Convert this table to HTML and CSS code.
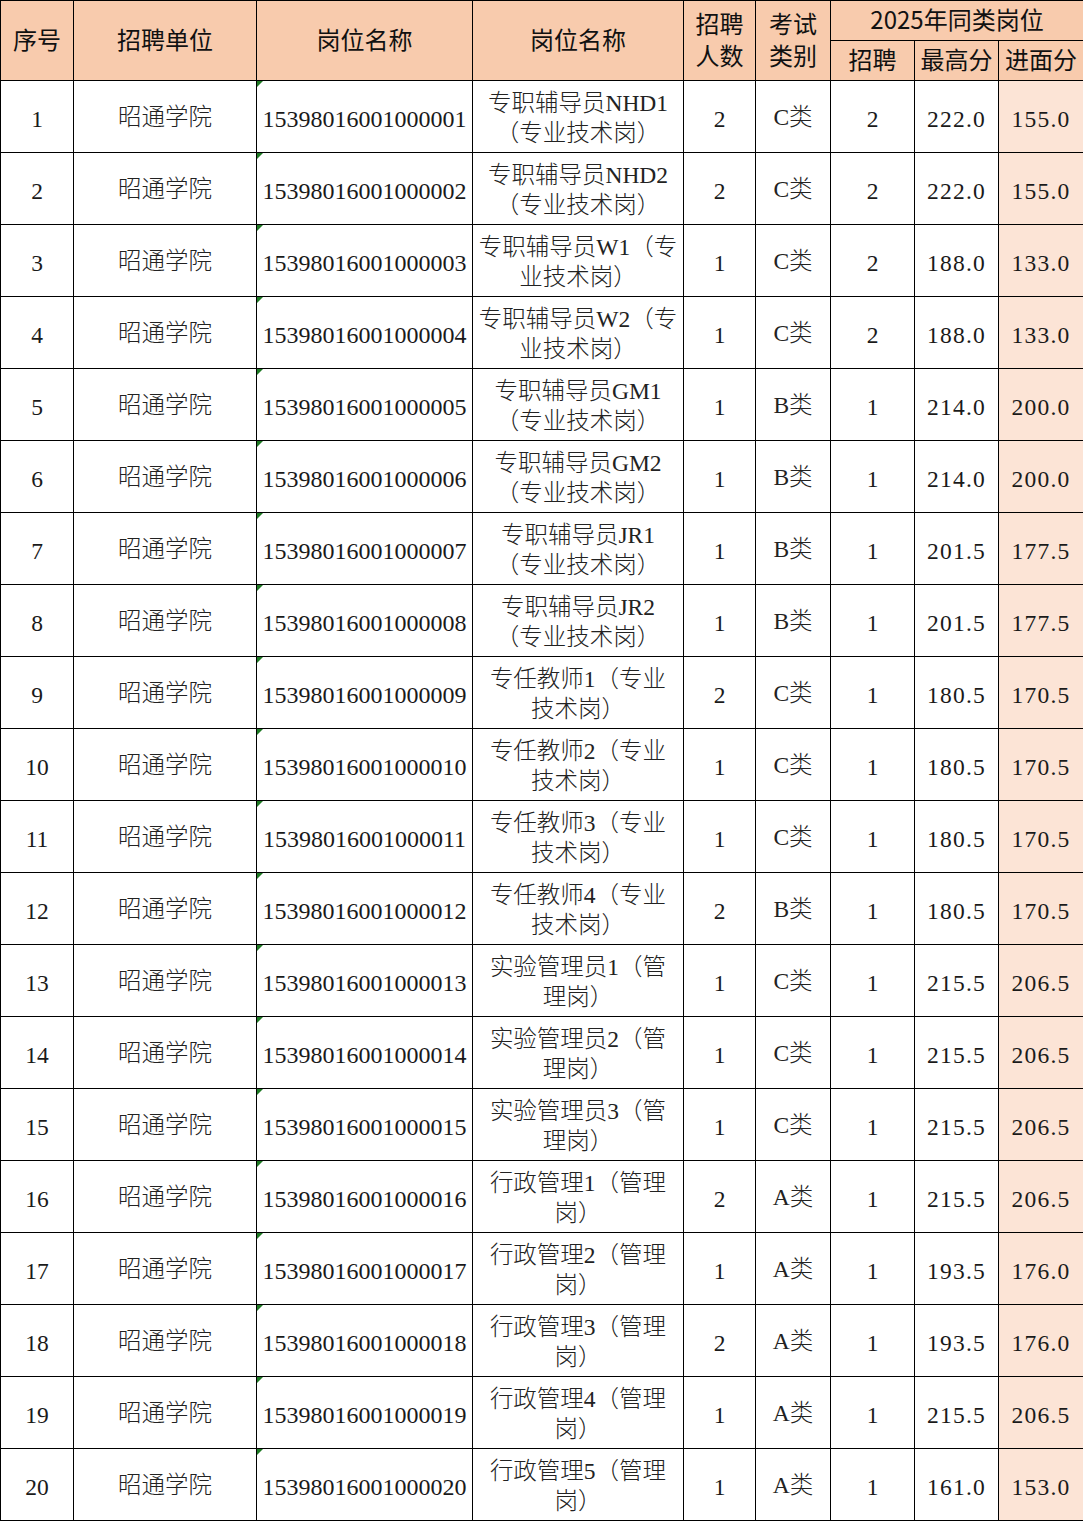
FILE: index.html
```html
<!DOCTYPE html>
<html lang="zh-CN">
<head>
<meta charset="utf-8">
<title>招聘岗位表</title>
<link rel="stylesheet" href="styles.css">
</head>
<body>
<table class="sheet">
  <colgroup>
    <col class="c-no"><col class="c-unit"><col class="c-code"><col class="c-name"><col class="c-num"><col class="c-type"><col class="c-hire"><col class="c-max"><col class="c-min">
  </colgroup>
  <thead>
    <tr class="h1">
      <th rowspan="2">序号</th>
      <th rowspan="2">招聘单位</th>
      <th rowspan="2">岗位名称</th>
      <th rowspan="2">岗位名称</th>
      <th rowspan="2" class="two">招聘<br>人数</th>
      <th rowspan="2" class="two">考试<br>类别</th>
      <th colspan="3">2025年同类岗位</th>
    </tr>
    <tr class="h2">
      <th>招聘</th>
      <th>最高分</th>
      <th>进面分</th>
    </tr>
  </thead>
  <tbody>
    <tr><td>1</td><td class="cn">昭通学院</td><td class="code">15398016001000001</td><td class="cn nm">专职辅导员NHD1<br>（专业技术岗）</td><td>2</td><td class="cn">C类</td><td>2</td><td class="sc">222.0</td><td class="sc hl">155.0</td></tr>
    <tr><td>2</td><td class="cn">昭通学院</td><td class="code">15398016001000002</td><td class="cn nm">专职辅导员NHD2<br>（专业技术岗）</td><td>2</td><td class="cn">C类</td><td>2</td><td class="sc">222.0</td><td class="sc hl">155.0</td></tr>
    <tr><td>3</td><td class="cn">昭通学院</td><td class="code">15398016001000003</td><td class="cn nm">专职辅导员W1（专<br>业技术岗）</td><td>1</td><td class="cn">C类</td><td>2</td><td class="sc">188.0</td><td class="sc hl">133.0</td></tr>
    <tr><td>4</td><td class="cn">昭通学院</td><td class="code">15398016001000004</td><td class="cn nm">专职辅导员W2（专<br>业技术岗）</td><td>1</td><td class="cn">C类</td><td>2</td><td class="sc">188.0</td><td class="sc hl">133.0</td></tr>
    <tr><td>5</td><td class="cn">昭通学院</td><td class="code">15398016001000005</td><td class="cn nm">专职辅导员GM1<br>（专业技术岗）</td><td>1</td><td class="cn">B类</td><td>1</td><td class="sc">214.0</td><td class="sc hl">200.0</td></tr>
    <tr><td>6</td><td class="cn">昭通学院</td><td class="code">15398016001000006</td><td class="cn nm">专职辅导员GM2<br>（专业技术岗）</td><td>1</td><td class="cn">B类</td><td>1</td><td class="sc">214.0</td><td class="sc hl">200.0</td></tr>
    <tr><td>7</td><td class="cn">昭通学院</td><td class="code">15398016001000007</td><td class="cn nm">专职辅导员JR1<br>（专业技术岗）</td><td>1</td><td class="cn">B类</td><td>1</td><td class="sc">201.5</td><td class="sc hl">177.5</td></tr>
    <tr><td>8</td><td class="cn">昭通学院</td><td class="code">15398016001000008</td><td class="cn nm">专职辅导员JR2<br>（专业技术岗）</td><td>1</td><td class="cn">B类</td><td>1</td><td class="sc">201.5</td><td class="sc hl">177.5</td></tr>
    <tr><td>9</td><td class="cn">昭通学院</td><td class="code">15398016001000009</td><td class="cn nm">专任教师1（专业<br>技术岗）</td><td>2</td><td class="cn">C类</td><td>1</td><td class="sc">180.5</td><td class="sc hl">170.5</td></tr>
    <tr><td>10</td><td class="cn">昭通学院</td><td class="code">15398016001000010</td><td class="cn nm">专任教师2（专业<br>技术岗）</td><td>1</td><td class="cn">C类</td><td>1</td><td class="sc">180.5</td><td class="sc hl">170.5</td></tr>
    <tr><td>11</td><td class="cn">昭通学院</td><td class="code">15398016001000011</td><td class="cn nm">专任教师3（专业<br>技术岗）</td><td>1</td><td class="cn">C类</td><td>1</td><td class="sc">180.5</td><td class="sc hl">170.5</td></tr>
    <tr><td>12</td><td class="cn">昭通学院</td><td class="code">15398016001000012</td><td class="cn nm">专任教师4（专业<br>技术岗）</td><td>2</td><td class="cn">B类</td><td>1</td><td class="sc">180.5</td><td class="sc hl">170.5</td></tr>
    <tr><td>13</td><td class="cn">昭通学院</td><td class="code">15398016001000013</td><td class="cn nm">实验管理员1（管<br>理岗）</td><td>1</td><td class="cn">C类</td><td>1</td><td class="sc">215.5</td><td class="sc hl">206.5</td></tr>
    <tr><td>14</td><td class="cn">昭通学院</td><td class="code">15398016001000014</td><td class="cn nm">实验管理员2（管<br>理岗）</td><td>1</td><td class="cn">C类</td><td>1</td><td class="sc">215.5</td><td class="sc hl">206.5</td></tr>
    <tr><td>15</td><td class="cn">昭通学院</td><td class="code">15398016001000015</td><td class="cn nm">实验管理员3（管<br>理岗）</td><td>1</td><td class="cn">C类</td><td>1</td><td class="sc">215.5</td><td class="sc hl">206.5</td></tr>
    <tr><td>16</td><td class="cn">昭通学院</td><td class="code">15398016001000016</td><td class="cn nm">行政管理1（管理<br>岗）</td><td>2</td><td class="cn">A类</td><td>1</td><td class="sc">215.5</td><td class="sc hl">206.5</td></tr>
    <tr><td>17</td><td class="cn">昭通学院</td><td class="code">15398016001000017</td><td class="cn nm">行政管理2（管理<br>岗）</td><td>1</td><td class="cn">A类</td><td>1</td><td class="sc">193.5</td><td class="sc hl">176.0</td></tr>
    <tr><td>18</td><td class="cn">昭通学院</td><td class="code">15398016001000018</td><td class="cn nm">行政管理3（管理<br>岗）</td><td>2</td><td class="cn">A类</td><td>1</td><td class="sc">193.5</td><td class="sc hl">176.0</td></tr>
    <tr><td>19</td><td class="cn">昭通学院</td><td class="code">15398016001000019</td><td class="cn nm">行政管理4（管理<br>岗）</td><td>1</td><td class="cn">A类</td><td>1</td><td class="sc">215.5</td><td class="sc hl">206.5</td></tr>
    <tr><td>20</td><td class="cn">昭通学院</td><td class="code">15398016001000020</td><td class="cn nm">行政管理5（管理<br>岗）</td><td>1</td><td class="cn">A类</td><td>1</td><td class="sc">161.0</td><td class="sc hl">153.0</td></tr>
  </tbody>
</table>
</body>
</html>
```
FILE: styles.css
```css
html, body {
  margin: 0;
  padding: 0;
  background: #ffffff;
}

.sheet {
  border-collapse: collapse;
  table-layout: fixed;
  width: 1083px;
  font-family: "Liberation Serif", "Noto Sans CJK SC", serif;
  color: #1a1a1a;
}

.c-no { width: 73px; }
.c-unit { width: 183px; }
.c-code { width: 216px; }
.c-name { width: 211px; }
.c-num { width: 72px; }
.c-type { width: 75px; }
.c-hire { width: 84px; }
.c-max { width: 84px; }
.c-min { width: 85px; }

.sheet th,
.sheet td {
  border: 1px solid #000;
  text-align: center;
  vertical-align: middle;
  padding: 0;
  overflow: hidden;
  white-space: nowrap;
}

.sheet th {
  background: #f8cbad;
  font-family: "Noto Sans CJK SC", "Noto Sans", sans-serif;
  font-weight: 400;
  font-size: 24px;
  line-height: 30px;
  color: #111;
  padding-bottom: 3px;
}

.sheet .h1 th { height: 36px; }
.sheet .h2 th { height: 36px; }
.sheet th.two { line-height: 32px; }

.sheet td {
  height: 67px;
  padding-top: 4px;
  font-size: 23.5px;
  line-height: 30px;
}

.sheet td.cn {
  height: 71px;
  padding-top: 0;
  font-weight: 300;
  color: #222;
}

.sheet td.nm {
  height: 68px;
  padding-top: 3px;
}

.sheet td.sc {
  letter-spacing: 1.2px;
}

.sheet td.code {
  position: relative;
  font-size: 24px;
}

.sheet td.code::before {
  content: "";
  position: absolute;
  top: 0;
  left: 0;
  width: 0;
  height: 0;
  border-top: 6px solid #1e7a24;
  border-right: 6px solid transparent;
}

.sheet td.hl {
  background: #fce4d6;
}
```
